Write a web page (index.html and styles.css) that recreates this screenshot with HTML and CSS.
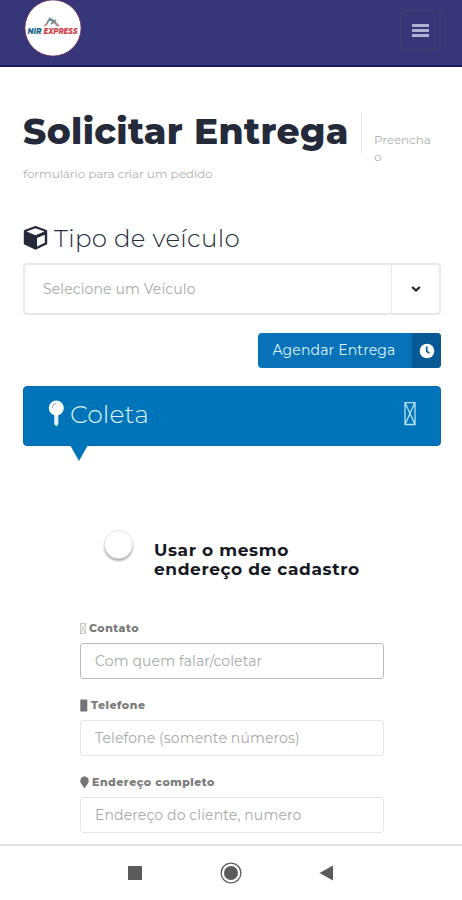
FILE: index.html
```html
<!DOCTYPE html>
<html lang="pt-BR">
<head>
<meta charset="utf-8">
<title>Solicitar Entrega</title>
<link rel="stylesheet" href="styles.css">
</head>
<body>
<header class="topbar">
  <svg class="logo" width="60" height="60" viewBox="0 0 60 60">
    <circle cx="30" cy="28" r="28.2" fill="#fff" stroke="#63285f" stroke-width="1"/>
    <path d="M23 25l3-5 4 1 5 5M26 18l5 3M33 20l-5 4" fill="none" stroke="#718b94" stroke-width="1.7"/>
    <path d="M21 26l3-2M32 22l4 4" fill="none" stroke="#d47975" stroke-width="1.3"/>
    <text class="logo-text" x="4.500" y="33.500" textLength="14" lengthAdjust="spacingAndGlyphs" fill="#176389">NIR</text>
    <text class="logo-text" x="20.500" y="33.500" textLength="34" lengthAdjust="spacingAndGlyphs" fill="#cc4148">EXPRESS</text>
  </svg>
  <button class="menu" aria-label="Menu"><i></i><i></i><i></i></button>
</header>
<main class="page">
  <div class="heading">
    <h1 class="title">Solicitar Entrega</h1>
    <span class="lead">Preencha<br>o</span>
  </div>
  <p class="sub">formulário para criar um pedido</p>
  <h2 class="vehicle">
    <svg width="26" height="26" viewBox="0 0 26 26"><path d="M12.500 2L23 6v12.500L12.500 23.500 2 18.500V6z" fill="#252a3b" stroke="#252a3b" stroke-width="2.400" stroke-linejoin="round"/><path d="M12.500 3.200L21.500 6.500l-9 3.800-9-3.800z M14 13L21.800 9.700v8l-7.800 3.800z" fill="#fff"/></svg>
    <span>Tipo de veículo</span>
  </h2>
  <div class="select">
    <span class="select-text">Selecione um Veículo</span>
    <span class="arrow"><svg width="10" height="8" viewBox="0 0 10 8"><path d="M1.200 2L5 5.500 8.800 2" fill="none" stroke="#222" stroke-width="2.200"/></svg></span>
  </div>
  <button class="schedule">
    <span class="schedule-text">Agendar Entrega</span>
    <span class="clock"><svg width="16" height="16" viewBox="0 0 16 16"><circle cx="8" cy="8" r="7.300" fill="#fff"/><path d="M7.700 3.500v4.700l2.500 2" fill="none" stroke="#075995" stroke-width="1.700"/></svg></span>
  </button>
  <section class="pickup">
    <svg width="17" height="28" viewBox="0 0 17 28"><path d="M6.200 14h4.200v10l-2 2.500-2.200-2.500z" fill="#e3f2f8"/><circle cx="8.300" cy="8" r="7.500" fill="#fff"/><path d="M4 8a4.500 4.500 0 0 1 4-4.300" fill="none" stroke="#7ab4d9" stroke-width="1"/></svg>
    <span class="pickup-text">Coleta</span>
    <svg class="missing" width="12" height="24" viewBox="0 0 12 24"><path d="M1 .5h10v22H1zM1 .5l10 22M11 .5L1 22.500" fill="none" stroke="#b5e2ef" stroke-width="1.300"/></svg>
  </section>
  <div class="same">
    <span class="knob"></span>
    <strong class="same-text">Usar o mesmo<br>endereço de cadastro</strong>
  </div>
  <form class="form">
    <label class="label"><svg width="6" height="11" viewBox="0 0 6 11"><path d="M.5.5h5v10h-5zM.5.5l5 10M5.500.5l-5 10" fill="none" stroke="#bbb" stroke-width=".8"/></svg><span>Contato</span></label>
    <div class="input active"><span>Com quem falar/coletar</span></div>
    <label class="label"><svg width="8" height="13" viewBox="0 0 8 13"><rect x=".3" y=".5" width="7" height="12" rx=".6" fill="#747474"/></svg><span>Telefone</span></label>
    <div class="input"><span>Telefone (somente números)</span></div>
    <label class="label"><svg width="9" height="13" viewBox="0 0 9 13"><path d="M4.500 12.500C3.500 10 .3 8 .3 4.700a4.200 4.200 0 0 1 8.400 0C8.700 8 5.500 10 4.500 12.500z" fill="#747474"/></svg><span>Endereço completo</span></label>
    <div class="input"><span>Endereço do cliente, numero</span></div>
  </form>
</main>
<nav class="system">
  <svg width="24" height="24" viewBox="0 0 24 24"><path d="M5 5h14v14H5z" fill="#5b5b5b"/></svg>
  <svg width="24" height="24" viewBox="0 0 24 24"><circle cx="12" cy="12" r="9.900" fill="none" stroke="#5b5b5b" stroke-width="1.300"/><circle cx="12" cy="12" r="7" fill="#5b5b5b"/></svg>
  <svg width="24" height="24" viewBox="0 0 24 24"><path d="M4.500 12L18 4.500v15z" fill="#5b5b5b"/></svg>
</nav>
</body>
</html>
```
FILE: styles.css
```css
* { box-sizing: border-box; }
body { margin: 0; height: 900px; overflow: hidden; display: flex; flex-direction: column; background: #fff; font-family: Montserrat, Inter, "Open Sans", sans-serif; color: #252a3b; }
button { font: inherit; border: 0; padding: 0; }
svg { display: block; flex: none; }
.topbar { height: 67px; flex: none; padding: 0 21px 0 23px; display: flex; justify-content: space-between; background: #363679; border-bottom: 2px solid #1c1c65; }
.logo-text { font-size: 8px; font-weight: 800; font-style: italic; }
.menu { width: 41px; height: 40px; margin-top: 10px; border: 2px solid #3c3e70; border-radius: 4px; background: transparent; display: flex; flex-direction: column; align-items: center; justify-content: center; gap: 2px; }
.menu i { width: 17px; height: 3px; background: #b0b0d0; }
.page { height: 777px; flex: none; padding: 0 21px 0 23px; overflow: hidden; }
.heading { height: 88px; padding-top: 45px; display: flex; }
.title { margin: 0; width: 339px; height: 42px; border-right: 1px solid #e8e8e8; font-size: 36px; line-height: 38px; font-weight: 800; white-space: nowrap; letter-spacing: 0.380px; }
.lead { padding: 19px 0 0 12px; font-size: 12px; line-height: 17px; color: #b0b0b0; font-weight: 400; letter-spacing: -0.100px; }
.sub { margin: 10px 0 0; font-size: 12px; line-height: 17px; color: #b0b0b0; font-weight: 400; letter-spacing: -0.070px; }
.vehicle { display: flex; align-items: center; gap: 5px; height: 32px; margin: 40px 0 9px; font-size: 24.500px; font-weight: 300; white-space: nowrap; letter-spacing: 0.350px; }
.select { height: 52px; border: 2px solid #e8e8e8; border-radius: 4px; display: flex; align-items: center; }
.select-text { flex: 1; padding-left: 18px; font-size: 14px; font-weight: 400; color: #a8a8a8; letter-spacing: 0.120px; }
.arrow { width: 48px; height: 100%; border-left: 1px solid #e8e8e8; display: flex; align-items: center; justify-content: center; }
.schedule { width: 183px; height: 35px; margin: 18px 0 18px auto; display: flex; align-items: center; overflow: hidden; background: #0872b9; border-radius: 4px; color: #def2fb; }
.schedule-text { flex: 1; font-size: 14px; font-weight: 400; line-height: 18px; padding: 0 2px 1px 0; letter-spacing: 0.150px; }
.clock { width: 29px; height: 100%; background: #075995; display: flex; align-items: center; justify-content: center; }
.pickup { position: relative; height: 60px; padding: 0 24px 5px 24px; display: flex; align-items: center; gap: 5px; background: #0074b8; border: 1px solid #0868af; border-radius: 4px; color: #dff3fa; }
.pickup::after { content: ""; position: absolute; left: 46px; top: 58px; border: 9px solid transparent; border-top: 16px solid #0074b8; border-bottom: 0; }
.pickup-text { flex: 1; font-size: 25px; font-weight: 300; letter-spacing: 0.150px; }
.same { display: flex; align-items: flex-start; height: 174px; padding: 84px 0 0 81px; }
.knob { width: 29px; height: 29px; border-radius: 50%; background: #fff; border: 1px solid #e4e4e4; box-shadow: 0 2px 2px #b0b0b0; }
.same-text { margin: 11px 0 0 21px; font-size: 17px; font-weight: 700; line-height: 19px; color: #151823; white-space: nowrap; letter-spacing: 0.600px; }
.form { width: 304px; margin-left: 57px; }
.label { height: 16px; margin-bottom: 7px; display: flex; align-items: center; gap: 3px; color: #7c7c7c; font-size: 11px; font-weight: 800; line-height: 16px; letter-spacing: 0.500px; }
.input { height: 36px; margin-bottom: 18px; padding-left: 14px; border: 1px solid #e5e5e5; border-radius: 3px; display: flex; align-items: center; color: #a8a8a8; font-size: 14px; font-weight: 400; white-space: nowrap; letter-spacing: 0.130px; }
.input.active { border-color: #bcbcbc; }
.system { height: 56px; flex: none; border-top: 2px solid #e2e2e2; padding: 0 123px 1px; display: flex; align-items: center; justify-content: space-between; }
```
